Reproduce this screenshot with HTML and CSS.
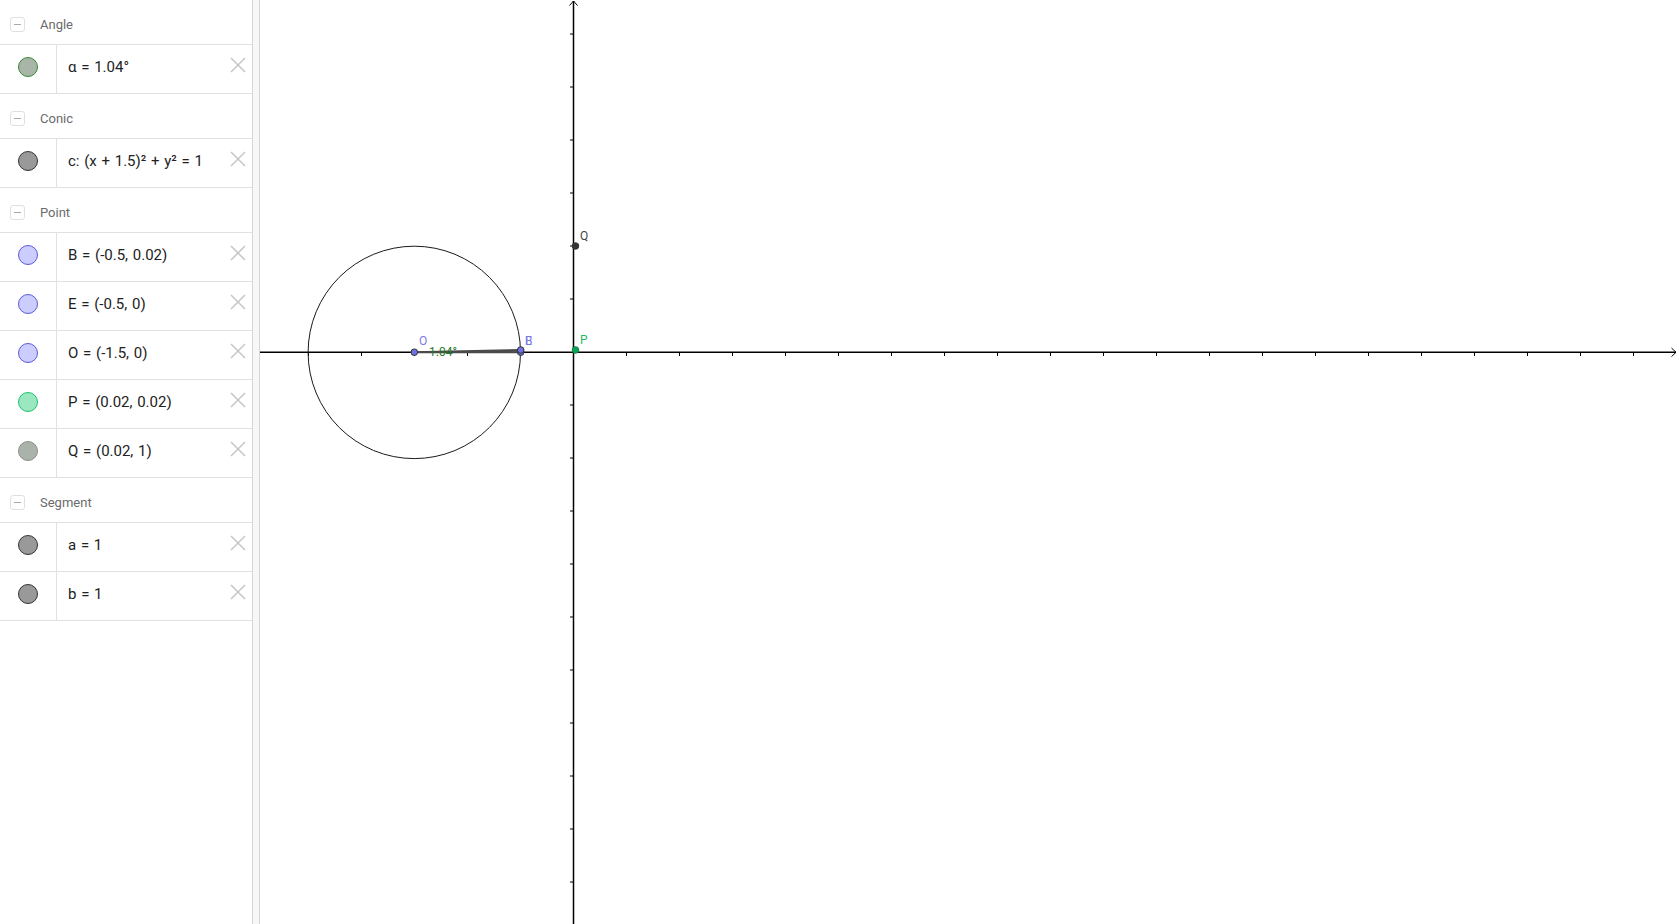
FILE: index.html
```html
<!DOCTYPE html>
<html lang="en">
<head>
<meta charset="utf-8">
<title>GeoGebra</title>
<link rel="stylesheet" href="styles.css">
</head>
<body>
<div class="app">
  <aside class="algebra">
    <div class="group-head"><span class="toggle"></span><span class="group-name">Angle</span></div>
    <div class="item"><div class="marble-cell"><span class="marble m-angle"></span></div><div class="formula">α = 1.04°</div><span class="del"><svg viewBox="0 0 16 16" width="16" height="16"><path d="M1 1L15 15M15 1L1 15"/></svg></span></div>

    <div class="group-head"><span class="toggle"></span><span class="group-name">Conic</span></div>
    <div class="item"><div class="marble-cell"><span class="marble m-dark"></span></div><div class="formula">c: (x + 1.5)² + y² = 1</div><span class="del"><svg viewBox="0 0 16 16" width="16" height="16"><path d="M1 1L15 15M15 1L1 15"/></svg></span></div>

    <div class="group-head"><span class="toggle"></span><span class="group-name">Point</span></div>
    <div class="item"><div class="marble-cell"><span class="marble m-blue"></span></div><div class="formula">B = (-0.5, 0.02)</div><span class="del"><svg viewBox="0 0 16 16" width="16" height="16"><path d="M1 1L15 15M15 1L1 15"/></svg></span></div>
    <div class="item"><div class="marble-cell"><span class="marble m-blue"></span></div><div class="formula">E = (-0.5, 0)</div><span class="del"><svg viewBox="0 0 16 16" width="16" height="16"><path d="M1 1L15 15M15 1L1 15"/></svg></span></div>
    <div class="item"><div class="marble-cell"><span class="marble m-blue"></span></div><div class="formula">O = (-1.5, 0)</div><span class="del"><svg viewBox="0 0 16 16" width="16" height="16"><path d="M1 1L15 15M15 1L1 15"/></svg></span></div>
    <div class="item"><div class="marble-cell"><span class="marble m-green"></span></div><div class="formula">P = (0.02, 0.02)</div><span class="del"><svg viewBox="0 0 16 16" width="16" height="16"><path d="M1 1L15 15M15 1L1 15"/></svg></span></div>
    <div class="item"><div class="marble-cell"><span class="marble m-gray"></span></div><div class="formula">Q = (0.02, 1)</div><span class="del"><svg viewBox="0 0 16 16" width="16" height="16"><path d="M1 1L15 15M15 1L1 15"/></svg></span></div>

    <div class="group-head"><span class="toggle"></span><span class="group-name">Segment</span></div>
    <div class="item"><div class="marble-cell"><span class="marble m-dark"></span></div><div class="formula">a = 1</div><span class="del"><svg viewBox="0 0 16 16" width="16" height="16"><path d="M1 1L15 15M15 1L1 15"/></svg></span></div>
    <div class="item"><div class="marble-cell"><span class="marble m-dark"></span></div><div class="formula">b = 1</div><span class="del"><svg viewBox="0 0 16 16" width="16" height="16"><path d="M1 1L15 15M15 1L1 15"/></svg></span></div>
  </aside>
  <div class="splitter"></div>
  <main class="graphics">
    <svg class="plane" width="1419" height="924" viewBox="260 0 1419 924">
      <g class="ticks">
        <path d="M308.5 352v4M361.5 352v4M467.5 352v4M520.5 352v4M626.5 352v4M679.5 352v4M732.5 352v4M785.5 352v4M838.5 352v4M891.5 352v4M944.5 352v4M997.5 352v4M1050.5 352v4M1103.5 352v4M1156.5 352v4M1209.5 352v4M1262.5 352v4M1315.5 352v4M1368.5 352v4M1421.5 352v4M1474.5 352v4M1527.5 352v4M1580.5 352v4M1633.5 352v4M414.5 352v4"/>
        <path d="M570 34h3.5M570 87h3.5M570 140h3.5M570 193h3.5M570 246h3.5M570 299h3.5M570 405h3.5M570 458h3.5M570 511h3.5M570 564h3.5M570 617h3.5M570 670h3.5M570 723h3.5M570 776h3.5M570 829h3.5M570 882h3.5"/>
      </g>
      <g class="axes">
        <path d="M260 352.3H1676"/>
        <path d="M573.5 1V924"/>
        <path class="arrow" d="M1671.5 348L1676 352.3L1671.5 356.6"/>
        <path class="arrow" d="M569.5 5.5L573.5 1L577.5 5.5"/>
      </g>
      <circle class="conic" cx="414.3" cy="352.4" r="106.2"/>
      <path class="segment" d="M414.3 352.2L520.7 352.2M414.3 352.2L520.7 350"/>
      <text class="lbl-angle" x="429" y="356">1.04°</text>
      <circle class="pt pt-blue" cx="414.3" cy="352.2" r="3.3"/>
      <circle class="pt pt-blue" cx="520.7" cy="352.2" r="3.3"/>
      <circle class="pt pt-blue" cx="520.7" cy="350" r="3.3"/>
      <circle class="pt pt-green" cx="575.5" cy="350" r="3.3"/>
      <circle class="pt pt-black" cx="575.5" cy="246" r="3.3"/>
      <text class="lbl-blue" x="419" y="345">O</text>
      <text class="lbl-blue" x="525" y="345">B</text>
      <text class="lbl-blue" x="525" y="345">E</text>
      <text class="lbl-green" x="580" y="344">P</text>
      <text class="lbl-dark" x="580" y="240">Q</text>
    </svg>
  </main>
</div>
</body>
</html>
```

FILE: styles.css
```css
html, body {
  margin: 0;
  padding: 0;
  background: #ffffff;
}

.app {
  display: flex;
  width: 1679px;
  height: 924px;
  overflow: hidden;
  font-family: Roboto, "Liberation Sans", sans-serif;
}

.algebra {
  width: 252px;
  flex: none;
  background: #ffffff;
}

.group-head {
  display: flex;
  align-items: flex-start;
  height: 44px;
  border-bottom: 1px solid #e1e1e1;
}

.toggle {
  position: relative;
  width: 15px;
  height: 15px;
  box-sizing: border-box;
  margin: 17px 0 0 10px;
  border: 1px solid #e0e0e0;
  border-radius: 3px;
  flex: none;
}

.toggle::after {
  content: "";
  position: absolute;
  left: 3px;
  top: 6px;
  width: 7px;
  height: 1px;
  background: #a8a8a8;
}

.group-name {
  margin: 17px 0 0 15px;
  font-size: 13px;
  line-height: 15px;
  color: #6b6b6b;
}

.item {
  display: flex;
  align-items: flex-start;
  height: 48px;
  border-bottom: 1px solid #e1e1e1;
}

.marble-cell {
  width: 56px;
  height: 48px;
  flex: none;
  border-right: 1px solid #e1e1e1;
  display: flex;
  justify-content: center;
}

.marble {
  width: 20px;
  height: 20px;
  box-sizing: border-box;
  border-radius: 50%;
  margin-top: 12px;
  border: 1px solid #333333;
  background: #999999;
}

.m-angle {
  background: #a9b5a9;
  border-color: #348a34;
}

.m-dark {
  background: #999999;
  border-color: #333333;
}

.m-blue {
  background: #ccccff;
  border-color: #5a5ad6;
}

.m-green {
  background: #9be8c0;
  border-color: #1cc46c;
}

.m-gray {
  background: #aab3aa;
  border-color: #8a8f8a;
}

.formula {
  flex: 1;
  padding: 12px 0 0 11px;
  font-size: 15px;
  line-height: 20px;
  word-spacing: 1px;
  color: #222222;
  white-space: nowrap;
}

.del {
  width: 16px;
  height: 16px;
  margin: 12px 6px 0 0;
  flex: none;
}

.del svg {
  display: block;
  fill: none;
  stroke: #c6c6c6;
  stroke-width: 1.5;
}

.splitter {
  width: 8px;
  flex: none;
  box-sizing: border-box;
  border-left: 1px solid #d6d6d6;
  border-right: 1px solid #d6d6d6;
  background: #f7f7f7;
}

.graphics {
  flex: 1;
  background: #ffffff;
}

.plane {
  display: block;
}

.ticks path {
  stroke: #000000;
  stroke-width: 1;
  fill: none;
}

.axes path {
  stroke: #000000;
  stroke-width: 1.5;
  fill: none;
}

.axes .arrow {
  stroke-width: 1;
}

.conic {
  fill: none;
  stroke: #1a1a1a;
  stroke-width: 1;
}

.segment {
  stroke: #4a4a4a;
  stroke-width: 2;
  fill: none;
}

.pt {
  stroke: #333333;
  stroke-width: 1;
}

.pt-blue {
  fill: #6f6fe6;
}

.pt-green {
  fill: #00aa55;
  stroke: #227744;
}

.pt-black {
  fill: #333333;
}

.plane text {
  font-family: Roboto, "Liberation Sans", sans-serif;
  font-size: 12px;
}

.lbl-blue {
  fill: #7a7ae6;
}

.lbl-green {
  fill: #1fb866;
}

.lbl-dark {
  fill: #444444;
}

.lbl-angle {
  fill: #1f7a1f;
  font-size: 12.5px;
}
```
